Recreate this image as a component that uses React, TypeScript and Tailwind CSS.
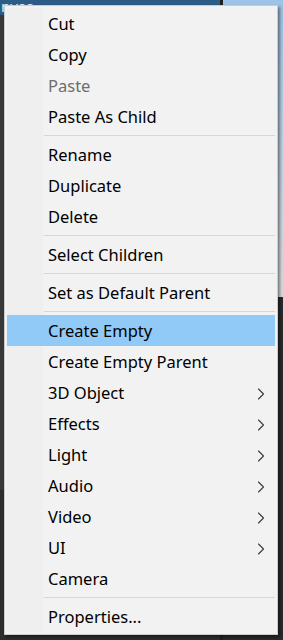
import { ChevronRight } from 'lucide-react';

type Entry =
  | { kind: 'item'; label: string; disabled?: boolean; sub?: boolean; active?: boolean }
  | { kind: 'sep' };

const entries: Entry[] = [
  { kind: 'item', label: 'Cut' },
  { kind: 'item', label: 'Copy' },
  { kind: 'item', label: 'Paste', disabled: true },
  { kind: 'item', label: 'Paste As Child' },
  { kind: 'sep' },
  { kind: 'item', label: 'Rename' },
  { kind: 'item', label: 'Duplicate' },
  { kind: 'item', label: 'Delete' },
  { kind: 'sep' },
  { kind: 'item', label: 'Select Children' },
  { kind: 'sep' },
  { kind: 'item', label: 'Set as Default Parent' },
  { kind: 'sep' },
  { kind: 'item', label: 'Create Empty', active: true },
  { kind: 'item', label: 'Create Empty Parent' },
  { kind: 'item', label: '3D Object', sub: true },
  { kind: 'item', label: 'Effects', sub: true },
  { kind: 'item', label: 'Light', sub: true },
  { kind: 'item', label: 'Audio', sub: true },
  { kind: 'item', label: 'Video', sub: true },
  { kind: 'item', label: 'UI', sub: true },
  { kind: 'item', label: 'Camera' },
  { kind: 'sep' },
  { kind: 'item', label: 'Properties...' },
];

export default function App() {
  return (
    <div className="relative w-[283px] h-[640px] overflow-hidden bg-[#383838] font-['Segoe_UI','Noto_Sans',sans-serif]">
      {/* editor behind the menu */}
      <div className="flex h-full">
        <div className="w-[220px] flex flex-col">
          <div className="h-[15px] bg-[#2c5d87] text-[#e8eef4] text-[15px] leading-[12px] pl-[1px]">nvas</div>
          <div className="flex-1 bg-[#383838]" />
          <div className="h-[150px] bg-[#2d2d2d]" />
        </div>
        <div className="w-[3px] bg-[#1f1f1f]" />
        <div className="flex-1 flex flex-col">
          <div className="h-[297px] bg-gradient-to-b from-[#9ec3e6] to-[#dcdcdc]" />
          <div className="flex-1 bg-[#2a2a2a]" />
        </div>
      </div>

      {/* context menu */}
      <div className="absolute left-[4px] top-[5px] w-[274px] border border-[#cccccc] bg-[#f2f2f2] p-[2px] shadow-[2px_2px_3px_rgba(0,0,0,0.45)]">
        <div className="flex flex-col bg-[linear-gradient(to_right,#efefef_36px,#f2f2f2_36px)]">
          {entries.map((e, i) =>
            e.kind === 'sep' ? (
              <div key={i} className="h-[7px] flex items-center pl-[37px]">
                <div className="h-px w-full bg-[#d7d7d7]" />
              </div>
            ) : (
              <div
                key={i}
                className={`h-[31px] flex items-center pl-[41px] pr-[4px] pt-[2px] text-[16.5px] ${
                  e.active ? 'bg-[#91c9f7]' : ''
                } ${e.disabled ? 'text-[#6d6d6d]' : 'text-black'}`}
              >
                <span className="flex-1">{e.label}</span>
                {e.sub && <ChevronRight className="w-[20px] h-[20px] text-[#3a3a3a]" strokeWidth={1.3} />}
              </div>
            )
          )}
        </div>
      </div>
    </div>
  );
}
